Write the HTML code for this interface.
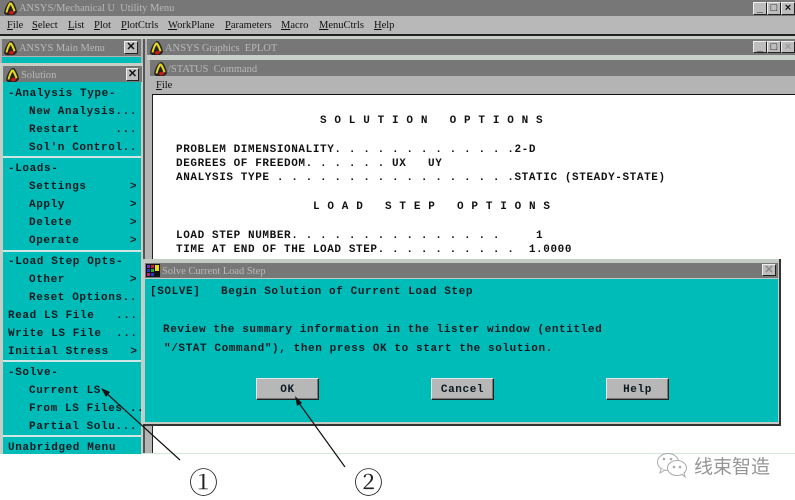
<!DOCTYPE html>
<html><head><meta charset="utf-8">
<style>
html,body{margin:0;padding:0;background:#fff}
#p{position:relative;width:795px;height:500px;overflow:hidden;background:#fff}
.b{position:absolute}
.m{position:absolute;margin-top:1px;font:bold 11px/14px "Liberation Mono",monospace;letter-spacing:.6px;color:#0a1a20;white-space:pre;filter:blur(.3px)}
.t{position:absolute;margin-top:2px;font:10.5px/16px "Liberation Serif",serif;letter-spacing:-.03px;color:#b8b8b8;white-space:pre;filter:blur(.35px)}
.u{position:absolute;margin-top:1px;font:10.5px/14px "Liberation Serif",serif;color:#111;white-space:pre;filter:blur(.3px)}
.u u{text-decoration-thickness:1px}
.btn{position:absolute;background:#b7b7b7;box-sizing:border-box;border:1px solid;border-color:#e8e8e8 #222 #222 #e8e8e8;box-shadow:inset -1px -1px 0 #777;text-align:center;font:bold 11px/22px "Liberation Mono",monospace;letter-spacing:.6px;color:#0a1a20}
.c{position:absolute;box-sizing:border-box;background:#bdbdbd;border:1px solid;border-color:#eee #222 #222 #eee;text-align:center;font:bold 11px/11px "Liberation Sans",sans-serif;color:#111}
.d{position:absolute;left:3px;width:138px;height:2px;background:#cfe6e4}
svg{position:absolute;overflow:visible}
</style></head><body><div id="p">
<svg width="0" height="0" style="position:absolute"><defs><g id="a"><path d="M1 13 Q2 6 6 2 Q8 0 10 2 Q13 6 14 12 Q12 16 7 15 Q3 16 1 13Z" fill="#222"/><path d="M2.5 12.5 Q4 6 6.5 2.5 L8.5 2.5 Q11 6 12.5 11 L10.5 11.5 Q9 7 7.5 5 Q5.5 8 4.5 12.5Z" fill="#e6d81c"/><path d="M5.5 13 Q8 9 11.5 12 Q10 15 7.5 14.5Z" fill="#c81818"/></g></defs></svg>

<!-- Utility window -->
<div class="b" style="left:0;top:0;width:795px;height:16px;background:#777"></div>
<div class="b" style="left:0;top:16px;width:795px;height:18px;background:#b8b8b8"></div>
<div class="b" style="left:0;top:34px;width:795px;height:2px;background:#222"></div>
<div class="b" style="left:0;top:36px;width:795px;height:3px;background:#c8cfc8"></div>
<svg style="left:3px;top:0" width="15" height="15"><use href="#a"/></svg>
<div class="t" style="left:19px;top:0;margin-top:1px">ANSYS/Mechanical U  Utility Menu</div>
<div class="u" style="left:7px;top:18px"><u>F</u>ile</div>
<div class="u" style="left:32px;top:18px"><u>S</u>elect</div>
<div class="u" style="left:68px;top:18px"><u>L</u>ist</div>
<div class="u" style="left:94px;top:18px"><u>P</u>lot</div>
<div class="u" style="left:121px;top:18px"><u>P</u>lotCtrls</div>
<div class="u" style="left:168px;top:18px"><u>W</u>orkPlane</div>
<div class="u" style="left:225px;top:18px"><u>P</u>arameters</div>
<div class="u" style="left:281px;top:18px"><u>M</u>acro</div>
<div class="u" style="left:319px;top:18px"><u>M</u>enuCtrls</div>
<div class="u" style="left:374px;top:18px"><u>H</u>elp</div>
<div class="c" style="left:753px;top:2px;width:14px;height:13px">_</div>
<div class="c" style="left:767px;top:2px;width:14px;height:13px">□</div>
<div class="c" style="left:781px;top:2px;width:14px;height:13px">×</div>

<!-- Left column -->
<div class="b" style="left:0;top:39px;width:143px;height:415px;background:#b4b4b4"></div>
<div class="b" style="left:2px;top:39px;width:139px;height:17px;background:#777"></div>
<div class="b" style="left:2px;top:57px;width:139px;height:6px;background:#00bcb8"></div>
<svg style="left:3px;top:40px" width="15" height="15"><use href="#a"/></svg>
<div class="t" style="left:19px;top:39px">ANSYS Main Menu</div>
<div class="c" style="left:124px;top:41px;width:14px;height:13px">✕</div>

<div class="b" style="left:0;top:63px;width:143px;height:391px;background:#c6cec6"></div>
<div class="b" style="left:3px;top:66px;width:139px;height:16px;background:#777"></div>
<svg style="left:5px;top:67px" width="15" height="15"><use href="#a"/></svg>
<div class="t" style="left:21px;top:66px">Solution</div>
<div class="c" style="left:126px;top:68px;width:13px;height:13px">✕</div>
<div class="b" style="left:3px;top:82px;width:138px;height:372px;background:#00bcb8"></div>
<div class="d" style="top:156px"></div>
<div class="d" style="top:250px"></div>
<div class="d" style="top:360px"></div>
<div class="d" style="top:435px"></div>

<div class="m" style="left:8px;top:86px">-Analysis Type-</div>
<div class="m" style="left:29px;top:104px">New Analysis...</div>
<div class="m" style="left:29px;top:122px">Restart     ...</div>
<div class="m" style="left:29px;top:140px">Sol'n Control..</div>
<div class="m" style="left:8px;top:161px">-Loads-</div>
<div class="m" style="left:29px;top:179px">Settings      &gt;</div>
<div class="m" style="left:29px;top:197px">Apply         &gt;</div>
<div class="m" style="left:29px;top:215px">Delete        &gt;</div>
<div class="m" style="left:29px;top:233px">Operate       &gt;</div>
<div class="m" style="left:8px;top:254px">-Load Step Opts-</div>
<div class="m" style="left:29px;top:272px">Other         &gt;</div>
<div class="m" style="left:29px;top:290px">Reset Options..</div>
<div class="m" style="left:8px;top:308px">Read LS File   ...</div>
<div class="m" style="left:8px;top:326px">Write LS File  ...</div>
<div class="m" style="left:8px;top:344px">Initial Stress   &gt;</div>
<div class="m" style="left:8px;top:365px">-Solve-</div>
<div class="m" style="left:29px;top:383px">Current LS</div>
<div class="m" style="left:29px;top:401px">From LS Files ..</div>
<div class="m" style="left:29px;top:419px">Partial Solu...</div>
<div class="m" style="left:8px;top:440px">Unabridged Menu</div>

<!-- Graphics window -->
<div class="b" style="left:143px;top:36px;width:652px;height:418px;background:#b4b4b4"></div>
<div class="b" style="left:143px;top:36px;width:652px;height:3px;background:#c8cfc8"></div>
<div class="b" style="left:143px;top:39px;width:2px;height:415px;background:#555"></div>
<div class="b" style="left:147px;top:39px;width:648px;height:16px;background:#777"></div>
<svg style="left:149px;top:40px" width="15" height="15"><use href="#a"/></svg>
<div class="t" style="left:165px;top:39px">ANSYS Graphics  EPLOT</div>
<div class="c" style="left:753px;top:41px;width:14px;height:12px">_</div>
<div class="c" style="left:767px;top:41px;width:14px;height:12px">□</div>
<div class="c" style="left:781px;top:41px;width:14px;height:12px;color:#999">×</div>
<div class="b" style="left:147px;top:55px;width:648px;height:5px;background:#c8cfc8"></div>

<div class="b" style="left:150px;top:60px;width:645px;height:16px;background:#777"></div>
<svg style="left:153px;top:61px" width="15" height="15"><use href="#a"/></svg>
<div class="t" style="left:168px;top:60px">/STATUS  Command</div>
<div class="b" style="left:150px;top:76px;width:645px;height:18px;background:#b4b4b4"></div>
<div class="u" style="left:156px;top:78px"><u>F</u>ile</div>
<div class="b" style="left:152px;top:94px;width:643px;height:360px;background:#fff;border-top:1px solid #111;border-left:1px solid #222;box-sizing:border-box"></div>

<div class="m" style="left:320px;top:113px;color:#111">S O L U T I O N   O P T I O N S</div>
<div class="m" style="left:176px;top:142px;color:#111">PROBLEM DIMENSIONALITY. . . . . . . . . . . . .2-D</div>
<div class="m" style="left:176px;top:156px;color:#111">DEGREES OF FREEDOM. . . . . . UX   UY</div>
<div class="m" style="left:176px;top:170px;color:#111">ANALYSIS TYPE . . . . . . . . . . . . . . . . .STATIC (STEADY-STATE)</div>
<div class="m" style="left:313px;top:199px;color:#111">L O A D   S T E P   O P T I O N S</div>
<div class="m" style="left:176px;top:228px;color:#111">LOAD STEP NUMBER. . . . . . . . . . . . . . .     1</div>
<div class="m" style="left:176px;top:242px;color:#111">TIME AT END OF THE LOAD STEP. . . . . . . . . .  1.0000</div>

<!-- page bottom -->
<div class="b" style="left:143px;top:453px;width:652px;height:1px;background:#d4e6d8"></div>

<!-- Dialog -->
<div class="b" style="left:143px;top:259px;width:638px;height:167px;box-sizing:border-box;background:#c4cac4;border-right:2px solid #333;border-bottom:2px solid #333"></div>
<div class="b" style="left:145px;top:263px;width:633px;height:15px;background:#777"></div>
<div class="b" style="left:145px;top:279px;width:633px;height:143px;background:#00bcb8"></div>
<svg style="left:146px;top:264px" width="14" height="13">
<rect width="14" height="13" fill="#111"/><rect x="1" y="1" width="3" height="3" fill="#7a2cc8"/><rect x="5" y="1" width="3" height="3" fill="#c02828"/><rect x="9" y="1" width="4" height="6" fill="#e8d820"/><rect x="1" y="5" width="3" height="3" fill="#2838c8"/><rect x="5" y="5" width="3" height="3" fill="#28a828"/><rect x="1" y="9" width="3" height="3" fill="#c02878"/><rect x="5" y="9" width="3" height="3" fill="#2838c8"/></svg>
<div class="t" style="left:162px;top:262px">Solve Current Load Step</div>
<div class="c" style="left:762px;top:264px;width:14px;height:12px;color:#888">✕</div>

<div class="m" style="left:150px;top:284px">[SOLVE]</div>
<div class="m" style="left:221px;top:284px">Begin Solution of Current Load Step</div>
<div class="m" style="left:163px;top:322px">Review the summary information in the lister window (entitled</div>
<div class="m" style="left:164px;top:341px">"/STAT Command"), then press OK to start the solution.</div>
<div class="btn" style="left:256px;top:378px;width:63px;height:22px">OK</div>
<div class="btn" style="left:431px;top:378px;width:63px;height:22px">Cancel</div>
<div class="btn" style="left:606px;top:378px;width:63px;height:22px">Help</div>

<!-- Arrows -->
<svg style="left:0;top:0" width="795" height="500">
<line x1="180" y1="460" x2="104" y2="391" stroke="#111" stroke-width="1.2"/>
<path d="M101 388 L110 392 L106 397Z" fill="#111"/>
<line x1="345" y1="467" x2="296" y2="399" stroke="#111" stroke-width="1.2"/>
<path d="M295 396 L302 403 L297 406Z" fill="#111"/>
</svg>
<div class="b" style="left:189px;top:465px;font:29px/34px 'Noto Serif CJK SC','Liberation Serif',serif;color:#222;width:29px;text-align:center">①</div>
<div class="b" style="left:354px;top:465px;font:29px/34px 'Noto Serif CJK SC','Liberation Serif',serif;color:#222;width:29px;text-align:center">②</div>

<!-- Watermark -->
<svg style="left:656px;top:451px" width="34" height="28" fill="#fff" stroke="#aaa" stroke-width="1">
<ellipse cx="12" cy="11" rx="10.5" ry="8.5"/><path d="M5 18 L4 22 L9 19"/>
<ellipse cx="21" cy="17" rx="9.5" ry="7.5"/><path d="M26 23 L29 26 L28 21"/>
<circle cx="8" cy="8" r=".8" fill="#aaa"/><circle cx="15" cy="8" r=".8" fill="#aaa"/><circle cx="18" cy="16" r=".8" fill="#aaa"/><circle cx="24" cy="16" r=".8" fill="#aaa"/>
</svg>
<div class="b" style="left:694px;top:454px;font:19px/24px 'Noto Sans CJK SC','Liberation Sans',sans-serif;color:#959595;white-space:pre;filter:blur(.3px)">线束智造</div>
</div></body></html>
